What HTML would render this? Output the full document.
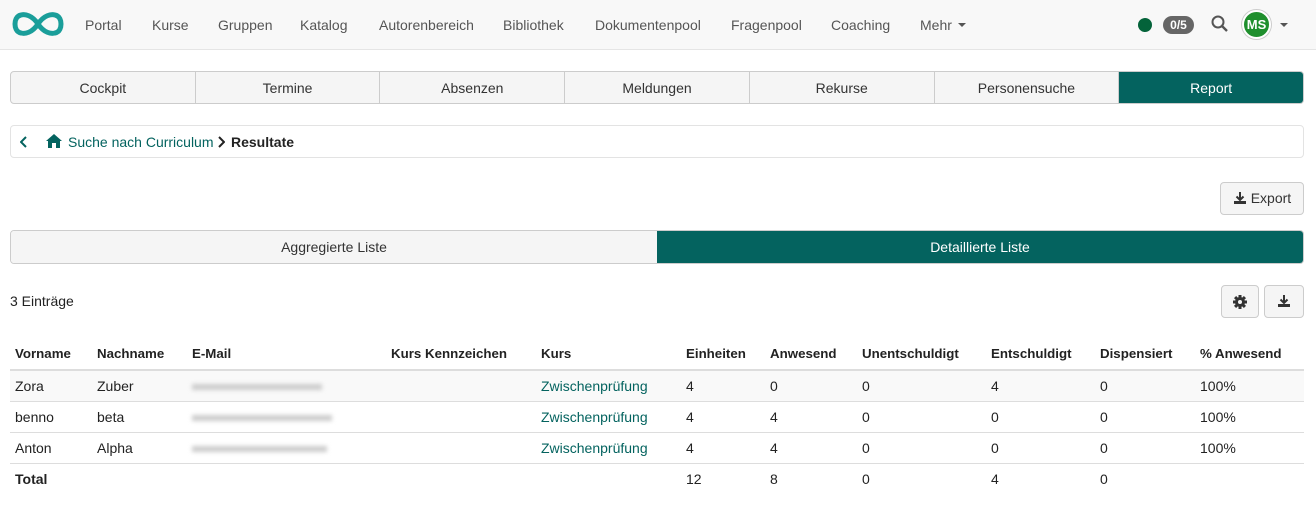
<!DOCTYPE html>
<html><head><meta charset="utf-8"><style>
*{box-sizing:border-box;margin:0;padding:0}
body{width:1316px;height:521px;background:#fff;font-family:"Liberation Sans",Arial,sans-serif;font-size:14px;color:#222;position:relative;overflow:hidden}
.a{position:absolute}
.nav{left:0;top:0;width:1316px;height:50px;background:#f8f8f8;border-bottom:1px solid #e5e5e5}
.nav span{position:absolute;top:17px;color:#555;font-size:14px}
.tabs{left:10px;top:71px;width:1294px;height:33px;display:flex;border:1px solid #ccc;border-radius:4px;overflow:hidden;background:#f5f5f5}
.tabs div{flex:1;text-align:center;line-height:32px;border-right:1px solid #ccc;color:#333}
.tabs div:last-child{border-right:none;background:#04635f;color:#fff}
.bc{left:10px;top:125px;width:1294px;height:33px;border:1px solid #e3e3e3;border-radius:4px}
.btn{border:1px solid #ccc;border-radius:4px;background:#f5f5f5}
.seg{left:10px;top:230px;width:1294px;height:34px;display:flex;border-radius:4px;overflow:hidden;border:1px solid #ccc}
.seg div{flex:1;text-align:center;line-height:32px}
table{position:absolute;left:10px;top:338px;width:1294px;border-collapse:collapse}
td,th{text-align:left;padding:0 5px;height:31px;font-size:14px}
th{font-weight:bold;border-bottom:2px solid #ddd;height:32px;font-size:13.3px}
tbody tr td{border-top:1px solid #ddd}
tr.s td{background:#f9f9f9}
.bl{display:inline-block;height:6px;background:#ccc;filter:blur(2px);vertical-align:middle}
a{color:#04635f;text-decoration:none}
</style></head><body>
<div class="a nav">
<svg class="a" style="left:12px;top:11px" width="52" height="26" viewBox="0 0 52 26"><path d="M26 13 C20 4 13 3 9 4 C4 5 3 10 3 13 C3 16 4 21 9 22 C13 23 20 22 26 13 C32 4 39 3 43 4 C48 5 49 10 49 13 C49 16 48 21 43 22 C39 23 32 22 26 13Z" fill="none" stroke="#1a9e9a" stroke-width="5"/></svg>
<span style="left:85px">Portal</span><span style="left:152px">Kurse</span><span style="left:218px">Gruppen</span><span style="left:300px">Katalog</span><span style="left:379px">Autorenbereich</span><span style="left:503px">Bibliothek</span><span style="left:595px">Dokumentenpool</span><span style="left:731px">Fragenpool</span><span style="left:831px">Coaching</span><span style="left:920px">Mehr</span>
<svg class="a" style="left:958px;top:23px" width="8" height="5" viewBox="0 0 8 5"><path d="M0 0 H8 L4 4Z" fill="#555"/></svg>
<div class="a" style="left:1138px;top:18px;width:14px;height:14px;border-radius:50%;background:#04633a"></div>
<div class="a" style="left:1163px;top:16px;width:31px;height:18px;border-radius:9px;background:#666;color:#fff;font-size:12px;font-weight:bold;text-align:center;line-height:18px">0/5</div>
<svg class="a" style="left:1211px;top:15px" width="18" height="18" viewBox="0 0 18 18"><circle cx="7" cy="7" r="5.5" fill="none" stroke="#555" stroke-width="2"/><path d="M11 11 L16 16" stroke="#555" stroke-width="2.4"/></svg>
<div class="a" style="left:1242px;top:10px;width:29px;height:29px;border-radius:50%;background:#1f8f2d;border:2px solid #fff;box-shadow:0 0 0 1px #ccc;color:#fff;font-weight:bold;font-size:13px;text-align:center;line-height:25px">MS</div>
<svg class="a" style="left:1280px;top:23px" width="8" height="5" viewBox="0 0 8 5"><path d="M0 0 H8 L4 4Z" fill="#555"/></svg>
</div>
<div class="a tabs"><div>Cockpit</div><div>Termine</div><div>Absenzen</div><div>Meldungen</div><div>Rekurse</div><div>Personensuche</div><div>Report</div></div>
<div class="a bc">
<svg class="a" style="left:9px;top:10px" width="8" height="12" viewBox="0 0 8 12"><path d="M6 1 L1 6 L6 11" fill="none" stroke="#04635f" stroke-width="2"/></svg>
<svg class="a" style="left:35px;top:8px" width="16" height="14" viewBox="0 0 16 14"><path d="M8 0 L16 7 L14 7 L14 14 L10 14 L10 9 L6 9 L6 14 L2 14 L2 7 L0 7Z" fill="#04635f"/></svg>
<span class="a" style="left:57px;top:8px;color:#04635f">Suche nach Curriculum</span>
<svg class="a" style="left:206px;top:10px" width="8" height="12" viewBox="0 0 8 12"><path d="M2 1 L7 6 L2 11" fill="none" stroke="#222" stroke-width="2"/></svg>
<span class="a" style="left:220px;top:8px;font-weight:bold">Resultate</span>
</div>
<div class="a btn" style="left:1220px;top:182px;width:84px;height:33px;line-height:31px;text-align:center;color:#333">
<svg style="vertical-align:-2px" width="14" height="14" viewBox="0 0 14 14"><path d="M7 1 V9 M3.5 5.5 L7 9 L10.5 5.5" fill="none" stroke="#333" stroke-width="2"/><path d="M1 10 H13 V13 H1Z" fill="#333"/></svg> Export</div>
<div class="a seg"><div style="background:#f5f5f5;color:#333">Aggregierte Liste</div><div style="background:#04635f;color:#fff">Detaillierte Liste</div></div>
<span class="a" style="left:10px;top:293px">3 Einträge</span>
<div class="a btn" style="left:1221px;top:285px;width:38px;height:33px;text-align:center;padding-top:9px">
<svg width="14" height="14" viewBox="0 0 14 14"><g fill="#333"><circle cx="7" cy="7" r="5"/><rect x="5.5" y="0" width="3" height="14"/><rect x="0" y="5.5" width="14" height="3"/><rect x="5.5" y="0" width="3" height="14" transform="rotate(45 7 7)"/><rect x="5.5" y="0" width="3" height="14" transform="rotate(-45 7 7)"/></g><circle cx="7" cy="7" r="2" fill="#f5f5f5"/></svg></div>
<div class="a btn" style="left:1264px;top:285px;width:40px;height:33px;text-align:center;padding-top:8px">
<svg width="14" height="14" viewBox="0 0 14 14"><path d="M7 1 V9 M3.5 5.5 L7 9 L10.5 5.5" fill="none" stroke="#333" stroke-width="2"/><path d="M1 10 H13 V13 H1Z" fill="#333"/></svg></div>
<table>
<colgroup><col style="width:82px"><col style="width:95px"><col style="width:199px"><col style="width:150px"><col style="width:145px"><col style="width:84px"><col style="width:92px"><col style="width:129px"><col style="width:109px"><col style="width:100px"><col></colgroup>
<thead><tr><th>Vorname</th><th>Nachname</th><th>E-Mail</th><th>Kurs Kennzeichen</th><th>Kurs</th><th>Einheiten</th><th>Anwesend</th><th>Unentschuldigt</th><th>Entschuldigt</th><th>Dispensiert</th><th>% Anwesend</th></tr></thead>
<tbody>
<tr class="s"><td>Zora</td><td>Zuber</td><td><span class="bl" style="width:130px"></span></td><td></td><td><a>Zwischenprüfung</a></td><td>4</td><td>0</td><td>0</td><td>4</td><td>0</td><td>100%</td></tr>
<tr><td>benno</td><td>beta</td><td><span class="bl" style="width:140px"></span></td><td></td><td><a>Zwischenprüfung</a></td><td>4</td><td>4</td><td>0</td><td>0</td><td>0</td><td>100%</td></tr>
<tr><td>Anton</td><td>Alpha</td><td><span class="bl" style="width:135px"></span></td><td></td><td><a>Zwischenprüfung</a></td><td>4</td><td>4</td><td>0</td><td>0</td><td>0</td><td>100%</td></tr>
<tr><td><b>Total</b></td><td></td><td></td><td></td><td></td><td>12</td><td>8</td><td>0</td><td>4</td><td>0</td><td></td></tr>
</tbody></table>
</body></html>
